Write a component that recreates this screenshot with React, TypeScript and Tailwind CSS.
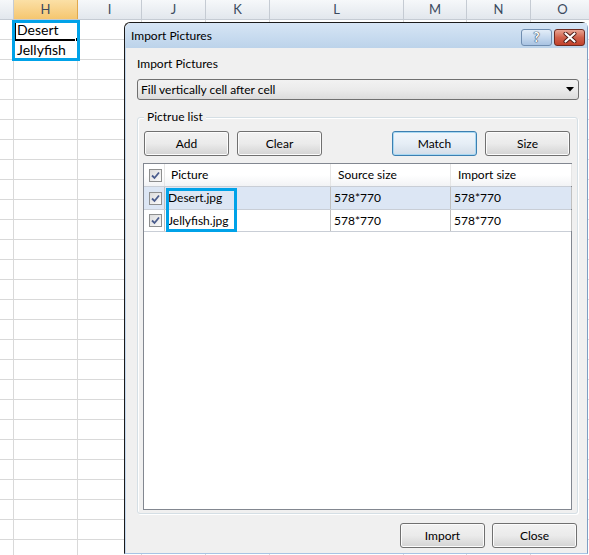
import React from "react";

const columns = [
  { label: "", w: 14 },
  { label: "H", w: 64 },
  { label: "I", w: 64 },
  { label: "J", w: 64 },
  { label: "K", w: 64 },
  { label: "L", w: 134 },
  { label: "M", w: 63 },
  { label: "N", w: 64 },
  { label: "O", w: 64 },
];

const cellValues: Record<string, string> = {
  "0-1": "Desert",
  "1-1": "Jellyfish",
};

const pictures = [
  { name: "Desert.jpg", source: "578*770", target: "578*770", selected: true },
  { name: "Jellyfish.jpg", source: "578*770", target: "578*770", selected: false },
];

function Sheet() {
  const rows = Array.from({ length: 27 }, (_, i) => i);
  return (
    <div className="font-['Lato','Liberation_Sans',sans-serif]">
      <div className="flex h-[20px] border-b border-[#c5cbd3] bg-gradient-to-b from-[#f6f8fa] to-[#e2e7ed]">
        {columns.map((c, i) => (
          <div
            key={i}
            style={{ width: c.w }}
            className={
              i === 1
                ? "flex shrink-0 items-center justify-center border-r border-[#e2a84b] bg-gradient-to-b from-[#fbe0a6] to-[#f5c66f] text-[13px] text-[#3b4a5e]"
                : "flex shrink-0 items-center justify-center border-r border-[#c5cbd3] text-[13px] text-[#3b4a5e]"
            }
          >
            {c.label}
          </div>
        ))}
      </div>
      {rows.map((r) => (
        <div key={r} className="flex h-[20px] border-b border-[#d9d9d9] bg-white">
          {columns.map((c, i) => (
            <div
              key={i}
              style={{ width: c.w }}
              className="flex shrink-0 items-center border-r border-[#d9d9d9] pl-[3px] text-[14px] leading-none text-black"
            >
              {cellValues[`${r}-${i}`] ?? ""}
            </div>
          ))}
        </div>
      ))}
    </div>
  );
}

function Check() {
  return (
    <div className="flex h-[13px] w-[13px] items-center justify-center border border-[#8e8f8f] bg-gradient-to-br from-[#dcdcdc] to-[#fbfbfb]">
      <svg width="9" height="9" viewBox="0 0 9 9">
        <path d="M1 4.5 L3.5 7 L8 1.5" fill="none" stroke="#4a5c8d" strokeWidth="1.8" />
      </svg>
    </div>
  );
}

function WinButton({ label, focused = false }: { label: string; focused?: boolean }) {
  return (
    <button
      className={
        focused
          ? "flex h-[25px] w-[85px] items-center justify-center rounded-[3px] border border-[#3c7fb1] bg-gradient-to-b from-[#f1f6fb] via-[#e6eef6] to-[#d3dde8] text-[12px] text-black shadow-[inset_0_0_0_1px_#a8d8f2]"
          : "flex h-[25px] w-[85px] items-center justify-center rounded-[3px] border border-[#707070] bg-gradient-to-b from-[#f2f2f2] via-[#ebebeb] to-[#d3d3d3] text-[12px] text-black shadow-[inset_0_0_0_1px_#fcfcfc]"
      }
    >
      {label}
    </button>
  );
}

function TitleBar() {
  return (
    <div className="flex h-[25px] items-center justify-between rounded-tl-[6px] bg-gradient-to-b from-[#d6e5f5] to-[#bcd3ea] pl-[6px] pr-[2px]">
      <span className="text-[12px] text-black">Import Pictures</span>
      <div className="mt-[4px] flex gap-[2px] self-start pt-[2px]">
        <div className="flex h-[17px] w-[31px] items-center justify-center rounded-[3px] border border-[#6f8db0] bg-gradient-to-b from-[#e3edf8] via-[#c6d9ee] to-[#a9c3e2] text-[13px] font-bold leading-none text-white [text-shadow:0_0_1px_#2d3e55,0_0_1px_#2d3e55,0_0_1px_#2d3e55]">
          ?
        </div>
        <div className="flex h-[17px] w-[31px] items-center justify-center rounded-[3px] border border-[#6e2a20] bg-gradient-to-b from-[#e8a493] via-[#d0614c] to-[#c1412b]">
          <svg width="14" height="11" viewBox="0 0 14 11">
            <path d="M2.5 1.5 L11.5 9.5 M11.5 1.5 L2.5 9.5" stroke="#4b1a14" strokeWidth="4" strokeLinecap="round" />
            <path d="M2.5 1.5 L11.5 9.5 M11.5 1.5 L2.5 9.5" stroke="#ffffff" strokeWidth="2.2" strokeLinecap="round" />
          </svg>
        </div>
      </div>
    </div>
  );
}

function PictureTable() {
  return (
    <div className="mx-[-1px] mt-[7px] h-[347px] border border-[#828790] bg-white">
      <div className="grid h-[22px] grid-cols-[21px_166px_120px_121px] bg-gradient-to-b from-white via-white to-[#f2f3f5] text-[12px]">
        <div className="flex items-center border-r border-[#e5e5e5] pl-[5px]">
          <Check />
        </div>
        <div className="flex items-center border-r border-[#e5e5e5] pl-[6px]">Picture</div>
        <div className="flex items-center border-r border-[#e5e5e5] pl-[7px]">Source size</div>
        <div className="flex items-center border-r border-[#e5e5e5] pl-[7px]">Import size</div>
      </div>
      {pictures.map((p) => (
        <div
          key={p.name}
          className={
            p.selected
              ? "grid h-[23px] grid-cols-[21px_166px_120px_121px] border-t border-[#c9ced6] bg-[#dce6f4] text-[12px]"
              : "grid h-[23px] grid-cols-[21px_166px_120px_121px] border-y border-[#c9ced6] bg-white text-[12px]"
          }
        >
          <div className="flex items-center border-r border-[#c0c0c0] pl-[5px]">
            <Check />
          </div>
          <div className="flex items-center border-r border-[#c0c0c0] pl-[3px]">{p.name}</div>
          <div className="flex items-center border-r border-[#c0c0c0] pl-[3px]">{p.source}</div>
          <div className="flex items-center border-r border-[#c0c0c0] pl-[3px]">{p.target}</div>
        </div>
      ))}
    </div>
  );
}

function ImportDialog() {
  return (
    <div className="absolute left-[124px] top-[22px] flex h-[532px] w-[464px] flex-col rounded-tl-[6px] rounded-tr-[6px] border border-b-[#a7c4e4] border-l-[#1b1b1b] border-r-[#7f9fc4] border-t-[#1b1b1b] bg-[#f0f0f0] font-['Lato','Liberation_Sans',sans-serif] text-black">
      <TitleBar />
      <div className="flex flex-1 flex-col border-l border-[#c4d8ee] pl-[11px] pr-[8px] pt-[8px]">
        <div className="h-[16px] text-[12px] leading-[16px]">Import Pictures</div>
        <div className="mt-[7px] flex h-[21px] items-center justify-between rounded-[3px] border border-[#707070] bg-gradient-to-b from-[#f2f2f2] via-[#ebebeb] to-[#dcdcdc] pl-[3px] pr-[4px] text-[12px]">
          <span>Fill vertically cell after cell</span>
          <svg width="8" height="5" viewBox="0 0 8 5">
            <path d="M0 0 H8 L4 4.5 Z" fill="#000" />
          </svg>
        </div>
        <div className="relative mt-[17px] h-[397px] w-[441px] rounded-[3px] border border-[#d5dfe5] px-[6px] pt-[13px] shadow-[inset_1px_1px_0_#ffffff,1px_1px_0_#ffffff]">
          <span className="absolute left-[6px] top-[-9px] bg-[#f0f0f0] px-[3px] text-[12px] leading-[16px]">
            Pictrue list
          </span>
          <div className="flex justify-between pr-[1px]">
            <div className="flex gap-[8px]">
              <WinButton label="Add" />
              <WinButton label="Clear" />
            </div>
            <div className="flex gap-[8px]">
              <WinButton label="Match" focused />
              <WinButton label="Size" />
            </div>
          </div>
          <PictureTable />
        </div>
        <div className="mt-[9px] flex justify-end gap-[7px] pr-[2px]">
          <WinButton label="Import" />
          <WinButton label="Close" />
        </div>
      </div>
    </div>
  );
}

export default function App() {
  return (
    <div className="relative h-[555px] w-[589px] overflow-hidden bg-white">
      <Sheet />
      {/* selection inside the sheet */}
      <div className="absolute left-[14px] top-[21px] h-[20px] w-[65px] border-[2px] border-black" />
      <div className="absolute left-[75px] top-[37px] h-[5px] w-[5px] border border-white bg-black" />
      <div className="absolute left-[12px] top-[20px] h-[41px] w-[68px] border-[3px] border-[#00a2e8]" />
      <ImportDialog />
      <div className="absolute left-[166px] top-[188px] h-[44px] w-[71px] border-[3px] border-[#00a2e8]" />
    </div>
  );
}
